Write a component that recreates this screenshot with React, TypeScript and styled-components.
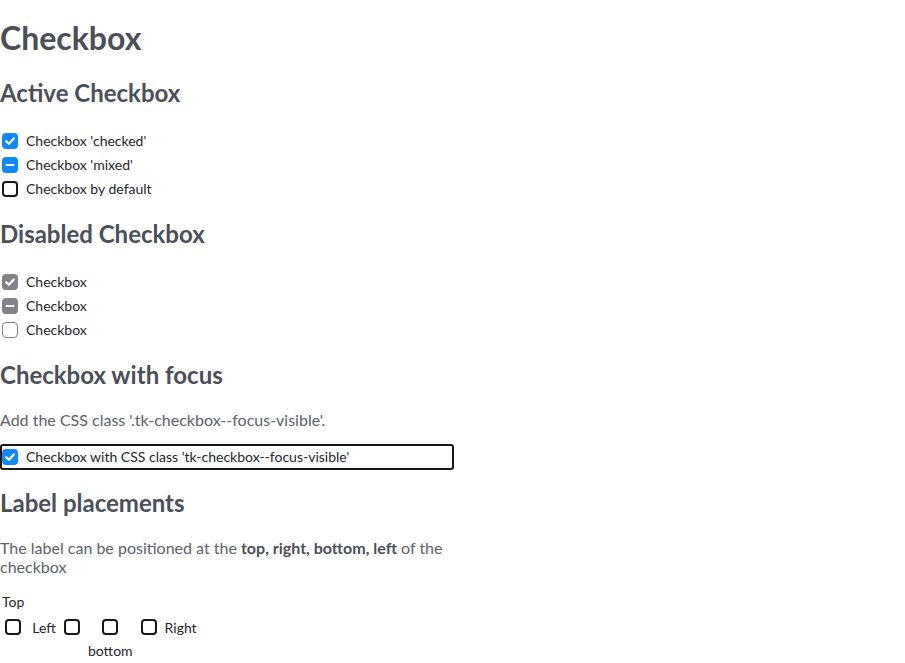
import styled, { createGlobalStyle } from "styled-components";

const GlobalStyle = createGlobalStyle`
  body {
    margin: 0;
    font-family: Lato, "Noto Sans", sans-serif;
    background: #ffffff;
  }
`;

const colors = {
  heading: "#4a4f59",
  text: "#5c616b",
  label: "#23262b",
  blue: "#0f88ff",
  disabled: "#80838a",
  border: "#15171a",
};

type BoxState = "checked" | "mixed" | "unchecked";

const Page = styled.main`
  width: 454px;
`;

const Title = styled.h1`
  font-size: 32px;
  line-height: 38px;
  font-weight: 700;
  color: ${colors.heading};
  margin: 19px 0 21px;
`;

// headings followed by a paragraph sit a pixel closer to it
const SectionTitle = styled.h2<{ $tight?: boolean }>`
  font-size: 24px;
  line-height: 29px;
  font-weight: 700;
  color: ${colors.heading};
  margin: 18px 0 ${(p) => (p.$tight ? 21 : 22)}px;
`;

const Text = styled.p`
  font-size: 16px;
  line-height: 19px;
  color: ${colors.text};
  margin: 18px 0 15px;

  b {
    font-weight: 700;
    color: #4a4f59;
  }
`;

const List = styled.div`
  display: flex;
  flex-direction: column;
`;

const Row = styled.label<{ $height?: number }>`
  display: flex;
  align-items: center;
  gap: 8px;
  height: ${(p) => p.$height ?? 24}px;
  padding-left: 2px;
  font-size: 14px;
  color: ${colors.label};
`;

const RowText = styled.span`
  margin-top: -1px;
`;

const FocusFrame = styled.div`
  border: 2px solid ${colors.border};
  border-radius: 3px;
  box-sizing: border-box;
  width: 454px;

  ${Row} {
    padding-left: 0;
  }
`;

const Box = styled.span<{ $state: BoxState; $disabled?: boolean }>`
  flex: none;
  display: inline-flex;
  align-items: center;
  justify-content: center;
  width: 16px;
  height: 16px;
  box-sizing: border-box;
  border-radius: 4px;
  border: 2px solid
    ${(p) =>
      p.$state === "unchecked"
        ? p.$disabled
          ? colors.disabled
          : colors.border
        : p.$disabled
        ? colors.disabled
        : colors.blue};
  border-width: ${(p) => (p.$state === "unchecked" && p.$disabled ? "1.5px" : "2px")};
  background: ${(p) =>
    p.$state === "unchecked" ? "#fff" : p.$disabled ? colors.disabled : colors.blue};
  grid-area: box;
`;

const Checkbox = ({ state, disabled }: { state: BoxState; disabled?: boolean }) => (
  <Box $state={state} $disabled={disabled}>
    {state === "checked" && (
      <svg width="12" height="12" viewBox="0 0 12 12">
        <path
          d="M2.2 6.2 L4.9 8.8 L9.8 3.4"
          fill="none"
          stroke="#fff"
          strokeWidth="2.2"
          strokeLinecap="round"
          strokeLinejoin="round"
        />
      </svg>
    )}
    {state === "mixed" && (
      <svg width="12" height="12" viewBox="0 0 12 12">
        <path d="M2.5 6 H9.5" stroke="#fff" strokeWidth="2" strokeLinecap="round" />
      </svg>
    )}
  </Box>
);

type Placement = "top" | "left" | "bottom" | "right";

const areas: Record<Placement, string> = {
  top: `"label" "." "box" "." "."`,
  bottom: `"." "." "box" "." "label"`,
  left: `". ." ". ." "label box" ". ." ". ."`,
  right: `". ." ". ." "box label" ". ." ". ."`,
};

const Placements = styled.div`
  display: flex;
  align-items: center;
  gap: 8px;
  padding: 1px 0 0 2px;
`;

const PlacementItem = styled.label<{ $placement: Placement }>`
  display: grid;
  grid-template-areas: ${(p) => areas[p.$placement]};
  grid-template-rows: 18px 9px 16px 6px 18px;
  column-gap: 8px;
  justify-items: center;
  align-items: center;
  font-size: 14px;
  color: ${colors.label};
`;

const PlacementLabel = styled.span`
  grid-area: label;
  white-space: nowrap;
`;

const placements: { placement: Placement; text: string }[] = [
  { placement: "top", text: "Top" },
  { placement: "left", text: "Left" },
  { placement: "bottom", text: "bottom" },
  { placement: "right", text: "Right" },
];

export default function App() {
  return (
    <Page>
      <GlobalStyle />
      <Title>Checkbox</Title>

      <SectionTitle>Active Checkbox</SectionTitle>
      <List>
        <Row>
          <Checkbox state="checked" />
          <RowText>Checkbox 'checked'</RowText>
        </Row>
        <Row>
          <Checkbox state="mixed" />
          <RowText>Checkbox 'mixed'</RowText>
        </Row>
        <Row>
          <Checkbox state="unchecked" />
          <RowText>Checkbox by default</RowText>
        </Row>
      </List>

      <SectionTitle>Disabled Checkbox</SectionTitle>
      <List>
        <Row>
          <Checkbox state="checked" disabled />
          <RowText>Checkbox</RowText>
        </Row>
        <Row>
          <Checkbox state="mixed" disabled />
          <RowText>Checkbox</RowText>
        </Row>
        <Row>
          <Checkbox state="unchecked" disabled />
          <RowText>Checkbox</RowText>
        </Row>
      </List>

      <SectionTitle $tight>Checkbox with focus</SectionTitle>
      <Text>Add the CSS class '.tk-checkbox--focus-visible'.</Text>
      <FocusFrame>
        <Row $height={22}>
          <Checkbox state="checked" />
          <RowText>Checkbox with CSS class 'tk-checkbox--focus-visible'</RowText>
        </Row>
      </FocusFrame>

      <SectionTitle $tight>Label placements</SectionTitle>
      <Text>
        The label can be positioned at the <b>top, right, bottom, left</b> of the checkbox
      </Text>
      <Placements>
        {placements.map(({ placement, text }) => (
          <PlacementItem key={placement} $placement={placement}>
            <Checkbox state="unchecked" />
            <PlacementLabel>{text}</PlacementLabel>
          </PlacementItem>
        ))}
      </Placements>
    </Page>
  );
}
